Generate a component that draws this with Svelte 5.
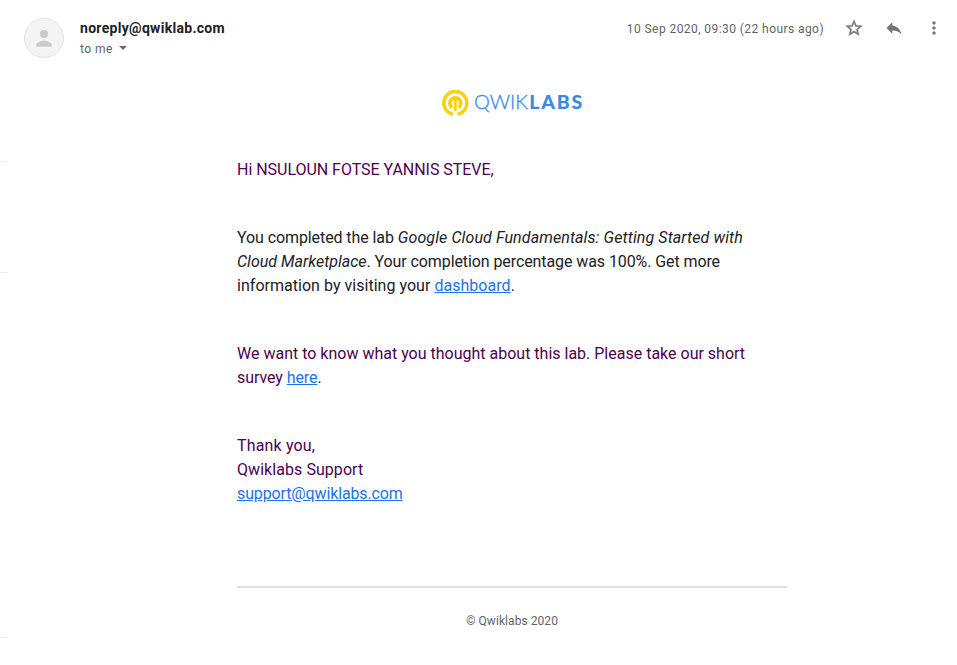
<script>
  const greeting = 'Hi NSULOUN FOTSE YANNIS STEVE,';
  const separators = [0, 1, 2];
</script>

<div class="page">
  <aside class="rail">
    {#each separators as s}
      <div class="sep s{s}"></div>
    {/each}
  </aside>

  <article class="message">
    <header>
      <svg class="avatar" width="40" height="40" viewBox="0 0 40 40">
        <circle cx="20" cy="20" r="19.5" fill="#f4f4f4" stroke="#e3e3e3" />
        <circle cx="20" cy="16.1" r="4" fill="#cbcbcb" />
        <path d="M12.200 28.700v-1.700c0-2.700 5-4.200 7.800-4.200s7.800 1.500 7.800 4.200v1.700z" fill="#cbcbcb" />
      </svg>
      <div class="who">
        <div class="from">noreply@qwiklab.com</div>
        <div class="to"><span>to me</span><i class="caret"></i></div>
      </div>
      <div class="tools">
        <span class="date">10 Sep 2020, 09:30 (22 hours ago)</span>
        <svg width="20" height="20" viewBox="0 0 24 24"><path stroke="#757575" stroke-width=".4" d="M22 9.24l-7.19-.62L12 2 9.19 8.63 2 9.24l5.46 4.73L5.82 21 12 17.27 18.18 21l-1.63-7.03L22 9.24zM12 15.4l-3.76 2.27 1-4.28-3.32-2.88 4.38-.38L12 6.1l1.71 4.04 4.38.38-3.32 2.88 1 4.28L12 15.4z" /></svg>
        <svg width="20" height="20" viewBox="0 0 24 24"><path d="M10 9V5l-7 7 7 7v-4.100c5 0 8.500 1.600 11 5.100-1-5-4-10-11-11z" /></svg>
        <svg width="20" height="20" viewBox="0 0 24 24"><path d="M12 8c1.100 0 2-.9 2-2s-.9-2-2-2-2 .9-2 2 .9 2 2 2zm0 2c-1.100 0-2 .9-2 2s.9 2 2 2 2-.9 2-2-.9-2-2-2zm0 6c-1.100 0-2 .9-2 2s.9 2 2 2 2-.9 2-2-.9-2-2-2z" /></svg>
      </div>
    </header>

    <section class="body">
      <svg class="logo" width="142" height="28" viewBox="0 0 142 28">
        <g fill="none" stroke="#fbd010">
          <path d="M12 25.300A11.500 11.500 0 1 1 16.600 25.300" stroke-width="3.500" />
          <path d="M10.900 18.400A5.400 5.400 0 1 1 17.700 18.400" stroke-width="3.800" />
          <path d="M14.300 10v12" stroke-width="2.800" />
        </g>
        <text x="33" y="20.300" class="light" textLength="54" lengthAdjust="spacingAndGlyphs">QWIK</text>
        <text x="88.300" y="20.300" class="heavy" textLength="53" lengthAdjust="spacing">LABS</text>
      </svg>

      <p class="quoted"><span class="greet">{greeting}</span></p>
      <p>
        <span class="lead">You completed the lab</span>{' '}<em><span class="title">Google Cloud Fundamentals: Getting Started with</span><br />Cloud Marketplace</em><span class="done">. Your completion percentage was 100%. Get more</span><br /><span class="info">information by visiting your <a href="#dashboard">dashboard</a>.</span>
      </p>
      <p class="quoted">
        <span>We want to know what you thought about this lab. Please take our short</span><br /><span class="survey">survey <a href="#survey">here</a>.</span>
      </p>
      <p class="quoted">
        <span class="thanks">Thank you,</span><br /><span class="team">Qwiklabs Support</span><br /><a class="mail" href="#support">support@qwiklabs.com</a>
      </p>
      <footer>© Qwiklabs 2020</footer>
    </section>
  </article>
</div>

<style>
  :global(body) { margin: 0; background: #fff; }
  .page {
    display: flex;
    width: 957px;
    height: 665px;
    overflow: hidden;
    font-family: Roboto, "Liberation Sans", sans-serif;
    color: #202124;
  }
  .rail { width: 8px; flex: none; display: flex; flex-direction: column; }
  .sep { height: 1px; background: #ebebeb; }
  .s0 { margin-top: 161px; }
  .s1 { margin-top: 110px; }
  .s2 { margin-top: 364px; }
  .message { flex: 1; }
  header { display: flex; height: 72px; padding: 18px 13px 0 16px; box-sizing: border-box; }
  .avatar { flex: none; }
  .who { margin-left: 16px; }
  .from { font-size: 14px; font-weight: 700; line-height: 20px; letter-spacing: 0.3px; }
  .to { display: flex; align-items: center; margin-top: 1px; font-size: 12px; line-height: 20px; letter-spacing: 0.45px; color: #5f6368; }
  .caret { margin: 0 0 2px 6px; border: 4px solid transparent; border-top-color: #6b6b6b; border-bottom: 0; }
  .tools { display: flex; align-items: center; height: 20px; margin-left: auto; gap: 20px; }
  .date { font-size: 12px; letter-spacing: 0.43px; color: #5f6368; line-height: 20px; padding-top: 2px; }
  .tools svg { fill: #757575; display: block; }
  .body { width: 550px; margin-left: 229px; padding-top: 17px; }
  .logo { display: block; margin: 0 auto 41px; }
  .logo text { font-family: Lato, sans-serif; font-size: 19.500px; fill: #3b87e8; }
  .logo .light { font-weight: 300; stroke: #3b87e8; stroke-width: 0.3px; }
  .logo .heavy { font-weight: 900; }
  p { margin: 0 0 44px; font-size: 16px; line-height: 24px; white-space: nowrap; }
  .greet { letter-spacing: -0.03px; }
  .lead { letter-spacing: -0.09px; }
  .title { letter-spacing: 0.1px; }
  .done { letter-spacing: -0.09px; }
  .info { letter-spacing: 0.03px; }
  .survey { letter-spacing: -0.08px; }
  .thanks { letter-spacing: 0.15px; }
  .team { letter-spacing: 0.06px; }
  .mail { letter-spacing: -0.13px; }
  .quoted { color: #500050; }
  a { color: #1a73e8; text-decoration: underline; }
  footer { margin-top: 80px; border-top: 2px solid #dfe0e6; padding-top: 23px; text-align: center; font-size: 12px; line-height: 20px; letter-spacing: 0.06px; color: #5f6368; }
</style>
